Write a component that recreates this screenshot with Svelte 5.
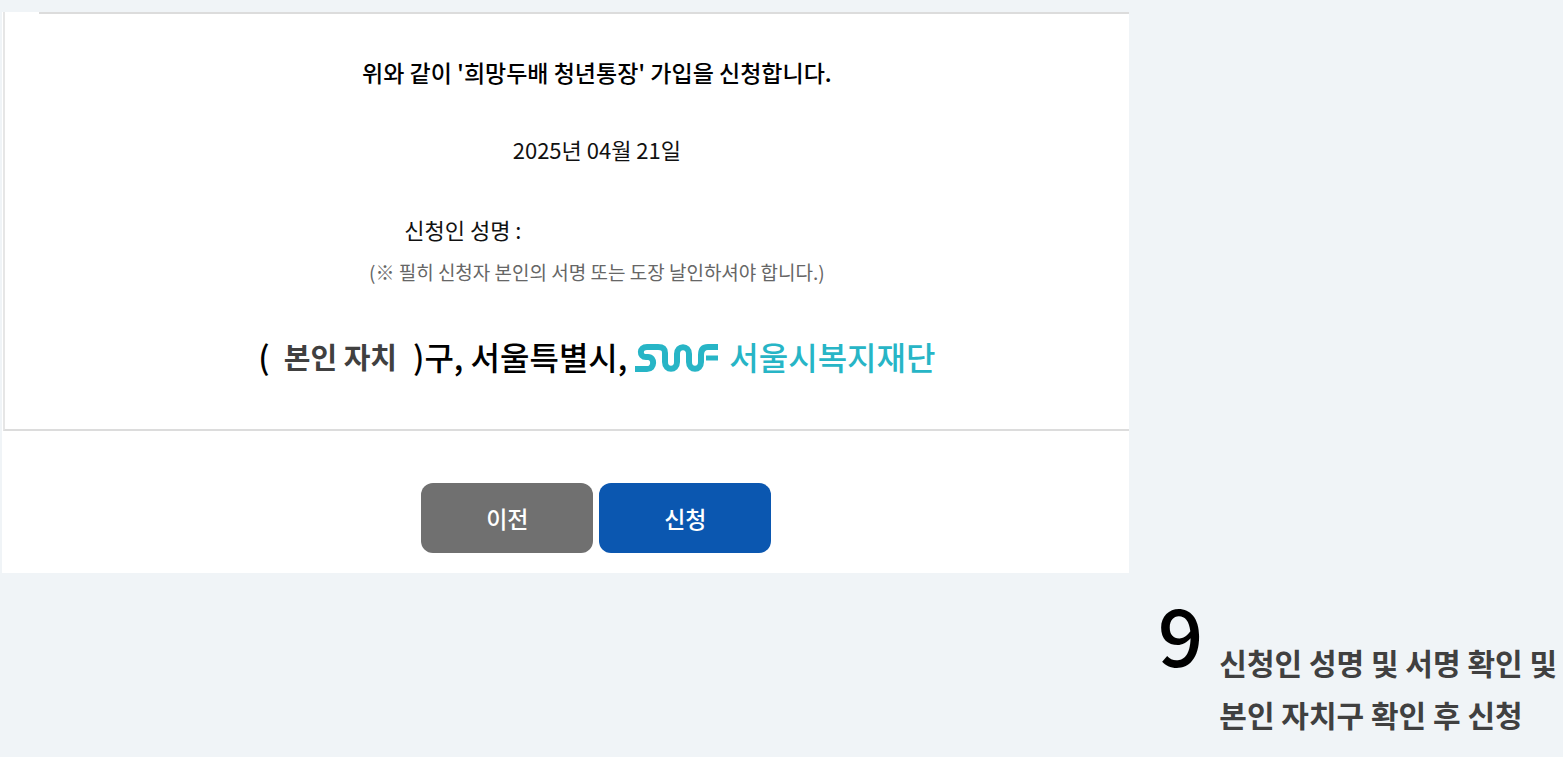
<script>
  let applyDate = '2025년 04월 21일';
  let district = '본인 자치';
  let step = 9;
  let guide = ['신청인 성명 및 서명 확인 및', '본인 자치구 확인 후 신청'];
</script>

<main class="page">
  <section class="screen">
    <div class="form-box">
      <h1>위와 같이 '희망두배 청년통장' 가입을 신청합니다.</h1>
      <p class="date">{applyDate}</p>
      <p class="applicant">신청인 성명 :</p>
      <p class="note">(※ 필히 신청자 본인의 서명 또는 도장 날인하셔야 합니다.)</p>
      <div class="receivers">
        <span class="paren">(</span>
        <span class="district">{district}</span>
        <span class="city">)구, 서울특별시,</span>
        <svg class="logo" viewBox="0 0 84 30" width="84" height="30" aria-hidden="true">
          <g fill="none" stroke="#27b5c6" stroke-width="6">
            <path d="M22 4H12C4 4 4 14 11 14H13C20 14 20 26 12 26H0" />
            <path d="M21 4H23C28 4 30 6 30 10V19C30 28 42 28 42 19V11C42 2 54 2 54 11V19C54 28 66 28 66 19V12C66 6 69 4 73 4H83" />
            <path d="M71 15H83" stroke-width="5" />
          </g>
        </svg>
        <span class="foundation">서울시복지재단</span>
      </div>
    </div>
    <div class="actions">
      <button type="button" class="prev">이전</button>
      <button type="button" class="submit">신청</button>
    </div>
  </section>

  <aside class="guide">
    <span class="step">{step}</span>
    <p>
      {#each guide as line}
        <span class="line">{line}</span>
      {/each}
    </p>
  </aside>
</main>

<style>
  :global(body) {
    margin: 0;
    background: #f0f4f7;
  }
  .page {
    display: grid;
    grid-template-columns: minmax(0, 1fr) auto;
    box-sizing: border-box;
    min-height: 100vh;
    padding: 12px 6px 17px 2px;
    font-family: 'Noto Sans CJK KR', sans-serif;
    color: #111;
  }
  h1,
  p {
    margin: 0;
  }
  .screen {
    align-self: start;
    background: #fff;
    margin-right: 29px;
    text-align: center;
    white-space: nowrap;
  }
  .form-box {
    display: flex;
    flex-direction: column;
    align-items: center;
    margin-left: 1px;
    padding: 0 0 50px 60px;
    border-left: 2px solid #e6e6e6;
    border-bottom: 2px solid #dcdcdc;
  }
  /* top rule starts a little in from the left edge */
  .form-box::before {
    content: '';
    align-self: stretch;
    height: 2px;
    margin: 0 0 40px -26px;
    background: #dcdcdc;
  }
  h1 {
    font-size: 23px;
    font-weight: 500;
    line-height: 36px;
    color: #000;
  }
  .date {
    margin-top: 42px;
    font-size: 22px;
    line-height: 34px;
  }
  .applicant {
    margin-top: 46px;
    padding-right: 268px;
    font-size: 22px;
    line-height: 34px;
  }
  .note {
    margin-top: 11px;
    font-size: 19px;
    line-height: 30px;
    color: #666;
  }
  .receivers {
    display: flex;
    align-items: center;
    margin-top: 46px;
    font-size: 32px;
    font-weight: 500;
    line-height: 46px;
    color: #000;
  }
  .district {
    margin: 0 16px 0 14px;
    font-size: 29px;
    font-weight: 700;
    color: #404040;
  }
  .logo {
    margin: 4px 10px 0 8px;
  }
  .foundation {
    color: #27b5c6;
  }
  .actions {
    display: flex;
    justify-content: center;
    gap: 6px;
    padding: 52px 0 20px 62px;
  }
  button {
    width: 172px;
    height: 70px;
    padding: 0;
    border: none;
    border-radius: 12px;
    font-family: inherit;
    font-size: 23px;
    font-weight: 500;
    color: #fff;
    cursor: pointer;
  }
  .prev {
    background: #707070;
  }
  .submit {
    background: #0b57b0;
  }
  .guide {
    display: flex;
    align-items: flex-start;
    align-self: end;
    gap: 16px;
    color: #404040;
  }
  .step {
    font-size: 80px;
    font-weight: 500;
    line-height: 80px;
    color: #000;
  }
  .guide p {
    padding-top: 44px;
    font-size: 30px;
    font-weight: 700;
    line-height: 52px;
    white-space: nowrap;
  }
  .line {
    display: block;
  }
</style>
